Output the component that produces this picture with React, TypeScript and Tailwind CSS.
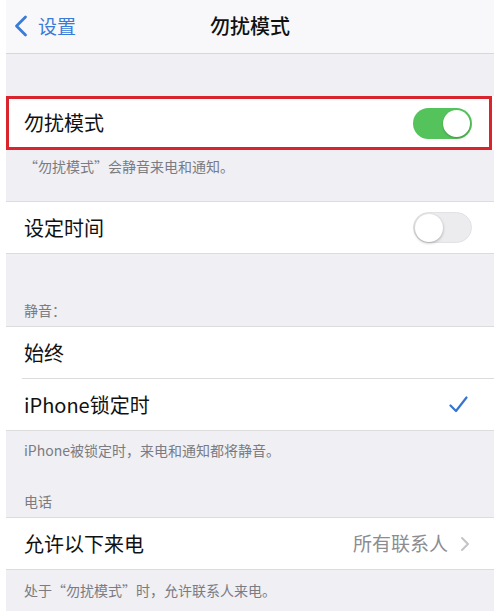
import React from 'react';

const font = { fontFamily: '"Noto Sans CJK SC", "Noto Sans", sans-serif' };

const Toggle: React.FC<{ on: boolean }> = ({ on }) =>
  on ? (
    <div className="flex h-[31px] w-[59px] items-center justify-end rounded-full bg-[#55c35c] p-[2px]">
      <div className="h-[27px] w-[27px] rounded-full bg-white shadow-[0_1px_2px_rgba(0,0,0,0.25)]" />
    </div>
  ) : (
    <div className="flex h-[31px] w-[59px] items-center justify-start rounded-full border border-[#e2e2e4] bg-[#ececee] p-[1px]">
      <div className="h-[28px] w-[28px] rounded-full bg-white shadow-[0_1px_3px_rgba(0,0,0,0.3)]" />
    </div>
  );

const Check = () => (
  <svg width="19" height="17" viewBox="0 0 19 17" fill="none">
    <path d="M1.5 9.5 L7 15 L17.5 1.5" stroke="#3574d2" strokeWidth="2.2" strokeLinecap="round" strokeLinejoin="round" />
  </svg>
);

const Footer: React.FC<{ children: React.ReactNode; className?: string }> = ({ children, className }) => (
  <div className={`px-[18px] text-[14px] leading-[18px] text-[#7b7b80] ${className ?? ''}`}>{children}</div>
);

const App: React.FC = () => {
  return (
    <div className="h-[616px] w-[500px] overflow-hidden bg-white px-[6px]" style={font}>
      <div className="bg-[#efeff4]">
        {/* Nav bar */}
        <div className="grid h-[54px] grid-cols-[1fr_auto_1fr] items-center border-b border-[#d7d7db] bg-[#f8f8fa] pb-[2px]">
          <div className="flex items-center gap-[10px] pl-[8px] text-[#3a7bd8]">
            <svg width="14" height="22" viewBox="0 0 14 22" fill="none">
              <path d="M11.5 2 L2.5 11 L11.5 20" stroke="#3a7bd8" strokeWidth="2.8" strokeLinecap="round" strokeLinejoin="round" />
            </svg>
            <span className="text-[19px] leading-none">设置</span>
          </div>
          <div className="text-[20px] font-medium leading-none text-[#111]">勿扰模式</div>
          <div />
        </div>

        <div className="h-[42px]" />

        {/* Do not disturb row with red highlight */}
        <div className="relative flex h-[54px] items-center justify-between bg-white pl-[18px] pr-[22px]">
          <span className="text-[20px] text-[#111]">勿扰模式</span>
          <Toggle on />
          <div className="pointer-events-none absolute inset-y-0 left-0 right-[2px] border-[3px] border-[#d9232d]" />
        </div>

        <Footer className="h-[51px] pt-[7px]">“勿扰模式”会静音来电和通知。</Footer>

        <div className="flex h-[53px] items-center justify-between border-y border-[#dcdcdf] bg-white pl-[18px] pr-[22px]">
          <span className="text-[20px] text-[#111]">设定时间</span>
          <Toggle on={false} />
        </div>

        <Footer className="flex h-[72px] items-end pb-[7px]">静音：</Footer>

        <div className="border-y border-[#dcdcdf] bg-white">
          <div className="flex h-[51px] items-center pl-[18px]">
            <span className="text-[20px] text-[#111]">始终</span>
          </div>
          <div className="ml-[16px] h-px bg-[#dcdcdf]" />
          <div className="flex h-[51px] items-center justify-between pl-[18px] pr-[26px]">
            <span className="text-[20px] text-[#111]">iPhone锁定时</span>
            <Check />
          </div>
        </div>

        <Footer className="pt-[10px]">iPhone被锁定时，来电和通知都将静音。</Footer>
        <Footer className="flex h-[58px] items-end pb-[7px]">电话</Footer>

        <div className="flex h-[53px] items-center justify-between border-y border-[#dcdcdf] bg-white pl-[18px] pr-[24px]">
          <span className="text-[20px] text-[#111]">允许以下来电</span>
          <div className="flex items-center gap-[12px]">
            <span className="text-[19px] text-[#8c8c91]">所有联系人</span>
            <svg width="10" height="16" viewBox="0 0 10 16" fill="none">
              <path d="M2 2 L8 8 L2 14" stroke="#c4c4c8" strokeWidth="2" strokeLinecap="round" strokeLinejoin="round" />
            </svg>
          </div>
        </div>

        <Footer className="h-[41px] pt-[11px]">处于“勿扰模式”时，允许联系人来电。</Footer>
      </div>
    </div>
  );
};

export default App;
